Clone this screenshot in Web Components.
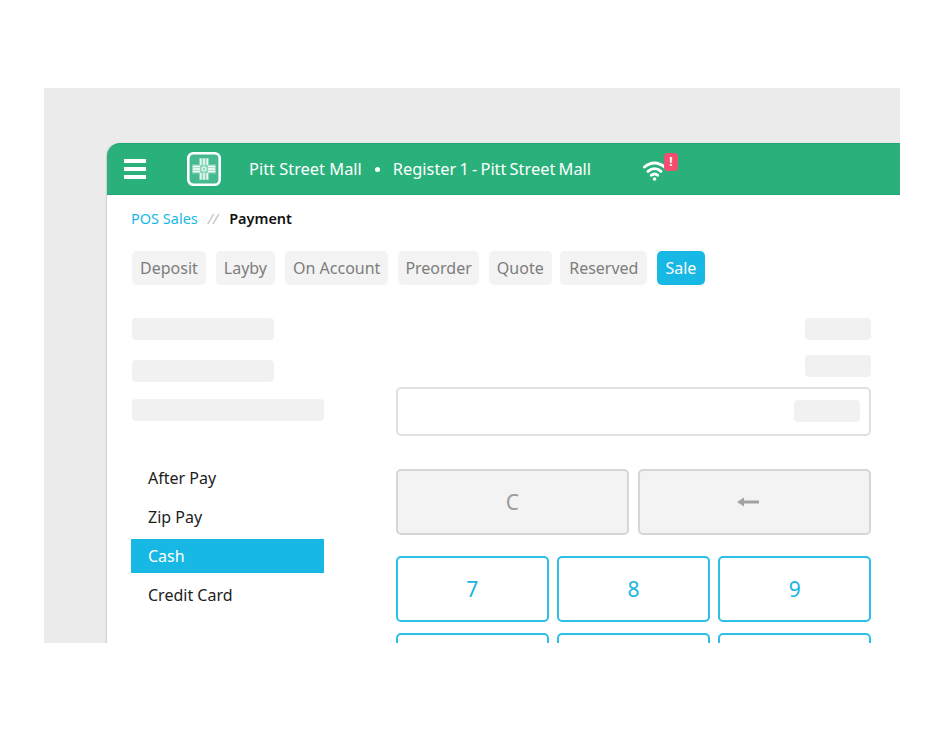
<!DOCTYPE html>
<html>
<head>
<meta charset="utf-8">
<title>POS Sales - Payment</title>
<style>
  html, body { margin: 0; background: #fff; }
  body { font-family: "Noto Sans", "Open Sans", sans-serif; height: 729px; overflow: hidden; }
</style>
</head>
<body>
<pos-stage>
  <pos-topbar>
    <span>Pitt Street Mall</span>
    <span>Register 1 - Pitt Street Mall</span>
  </pos-topbar>
  <pos-breadcrumb current="Payment">POS Sales</pos-breadcrumb>
  <pos-tabs>
    <pos-tab>Deposit</pos-tab>
    <pos-tab style="--px:7.5px">Layby</pos-tab>
    <pos-tab>On Account</pos-tab>
    <pos-tab style="--px:7.5px;margin-left:-1px">Preorder</pos-tab>
    <pos-tab style="margin-left:-1px">Quote</pos-tab>
    <pos-tab style="--px:9px;margin-left:-2px">Reserved</pos-tab>
    <pos-tab active style="--px:8.5px;margin-left:-1px">Sale</pos-tab>
  </pos-tabs>
  <pos-payment>
    <div slot="side">
      <pos-bar style="--w:142px;--h:22px;--mb:20px"></pos-bar>
      <pos-bar style="--w:142px;--h:22px;--mb:17px"></pos-bar>
      <pos-bar style="--w:192px;--h:22px;--mb:40px"></pos-bar>
      <pos-methods>
        <pos-method>After Pay</pos-method>
        <pos-method>Zip Pay</pos-method>
        <pos-method active>Cash</pos-method>
        <pos-method>Credit Card</pos-method>
      </pos-methods>
    </div>
    <pos-keypad></pos-keypad>
  </pos-payment>
</pos-stage>

<script>
class PosStage extends HTMLElement {
  constructor() {
    super()
    this.attachShadow({ mode: 'open' })
    this.shadowRoot.innerHTML = `
      <style>
        :host { display: block; width: 856px; height: 555px; margin: 88px 0 0 44px; padding: 55px 0 0 63px;
          box-sizing: border-box; background: #ebebeb; overflow: hidden; }
        #card { height: 520px; background: #fff; border-top-left-radius: 13px; box-shadow: -1px 0 1px #cfcfcf; }
      </style>
      <div id="card"><slot></slot></div>
    `
  }
}

class PosTopbar extends HTMLElement {
  constructor() {
    super()
    this.attachShadow({ mode: 'open' })
    this.shadowRoot.innerHTML = `
      <style>
        :host { display: flex; align-items: center; height: 52px; box-sizing: border-box; padding-left: 17px;
          background: #2ab17b; border-top: 1px solid #22a672; border-bottom: 1px solid #22a672;
          border-top-left-radius: 13px; color: #fff; font-size: 16.4px; }
        #menu { display: flex; flex-direction: column; gap: 4.5px; width: 22px; margin-right: 41px; }
        #menu i { display: block; height: 3.5px; background: #fff; }
        svg { display: block; flex: none; }
        #logo { margin-right: 28px; }
        #names { display: flex; align-items: center; white-space: nowrap; width: 395px; padding-bottom: 2px; }
        ::slotted([slot=second]) { word-spacing: -1.1px; }
        #dot { width: 5px; height: 5px; border-radius: 50%; background: #fff; margin: 2px 13px 0 13px; }
        #wifi { position: relative; width: 34px; height: 30px; }
        #badge { position: absolute; left: 20px; top: -1px; width: 14px; height: 18px; border-radius: 4px;
          background: #f54d6f; color: #fff; font: bold 12px/18px "Noto Sans", sans-serif; text-align: center; }
      </style>
      <div id="menu"><i></i><i></i><i></i></div>
      <svg id="logo" width="34" height="34" viewBox="0 0 34 34">
        <rect x="1.3" y="1.3" width="31.4" height="31.4" rx="5" fill="#45ba8e" stroke="#fff" stroke-width="2.6"/>
        <path d="M12 6h10v6.5h7v9h-7V28H12v-6.5H5v-9h7z" fill="#8ad8b9"/>
        <path d="M13.8 6.5v6.5M17 6.5v6.5M20.2 6.5v6.5M13.8 21v6.5M17 21v6.5M20.2 21v6.5M6 14.5h7M6 17h7M6 19.5h7M21 14.5h7M21 17h7M21 19.5h7" stroke="#fff" stroke-width="1.3"/>
        <circle cx="17" cy="17" r="2" fill="none" stroke="#fff" stroke-width="1"/>
      </svg>
      <div id="names"><slot name="first"></slot><span id="dot"></span><slot name="second"></slot></div>
      <div id="wifi">
        <svg width="24" height="24" viewBox="0 0 24 24" style="position:absolute;left:-1px;top:5px" fill="none" stroke="#fff" stroke-width="3" stroke-linecap="round">
          <path d="M1.5 8C7.5 2.5 15.5 2.5 21.5 8"/>
          <path d="M5 12.3C9 8.9 14 8.9 18 12.3"/>
          <path d="M8.4 16.2C10.4 14.6 12.6 14.6 14.6 16.2"/>
          <path d="M11.5 20h.1" stroke-width="3.4"/>
        </svg>
        <div id="badge">!</div>
      </div>
    `
    const spans = this.querySelectorAll('span')
    spans[0].slot = 'first'
    spans[1].slot = 'second'
  }
}

class PosBreadcrumb extends HTMLElement {
  constructor() {
    super()
    this.attachShadow({ mode: 'open' })
    const current = this.getAttribute('current')
    this.shadowRoot.innerHTML = `
      <style>
        :host { display: flex; align-items: center; height: 46px; padding-left: 24px; font-size: 14.5px; color: #17b8e4; }
        #sep { color: #bdbdbd; margin: 0 11px 0 10px; font-style: italic; }
        b { color: #111; font-weight: 600; }
      </style>
      <slot></slot><span id="sep">//</span><b>${current}</b>
    `
  }
}

class PosTabs extends HTMLElement {
  constructor() {
    super()
    this.attachShadow({ mode: 'open' })
    this.shadowRoot.innerHTML = `
      <style>
        :host { display: flex; gap: 10.5px; padding-left: 25px; margin-top: 10px; }
      </style>
      <slot></slot>
    `
  }
}

class PosTab extends HTMLElement {
  constructor() {
    super()
    this.attachShadow({ mode: 'open' })
    this.shadowRoot.innerHTML = `
      <style>
        :host { display: block; height: 34px; line-height: 34px; padding: 0 var(--px, 8px); border-radius: 5px;
          background: #f3f3f3; color: #7d7d7d; font-size: 16px; white-space: nowrap; }
        :host([active]) { background: #17b8e4; color: #fff; }
      </style>
      <slot></slot>
    `
  }
}

class PosPayment extends HTMLElement {
  constructor() {
    super()
    this.attachShadow({ mode: 'open' })
    this.shadowRoot.innerHTML = `
      <style>
        :host { display: grid; grid-template-columns: 193px 475px; column-gap: 72px; padding: 33px 0 0 24px; }
      </style>
      <slot name="side"></slot>
      <slot></slot>
    `
  }
}

class PosBar extends HTMLElement {
  constructor() {
    super()
    this.attachShadow({ mode: 'open' })
    this.shadowRoot.innerHTML = `
      <style>
        :host { display: block; width: var(--w); height: var(--h); margin-bottom: var(--mb, 0); margin-left: var(--ml, 1px);
          border-radius: 4px; background: #f1f1f1; }
      </style>
    `
  }
}

class PosMethods extends HTMLElement {
  constructor() {
    super()
    this.attachShadow({ mode: 'open' })
    this.shadowRoot.innerHTML = `
      <style>
        :host { display: flex; flex-direction: column; gap: 5px; }
      </style>
      <slot></slot>
    `
  }
}

class PosMethod extends HTMLElement {
  constructor() {
    super()
    this.attachShadow({ mode: 'open' })
    this.shadowRoot.innerHTML = `
      <style>
        :host { display: block; height: 34px; line-height: 34px; padding-left: 17px; color: #1c1c1c; font-size: 16px; }
        :host([active]) { background: #17b8e4; color: #fff; }
      </style>
      <slot></slot>
    `
  }
}

class PosKey extends HTMLElement {
  constructor() {
    super()
    this.attachShadow({ mode: 'open' })
    this.shadowRoot.innerHTML = `
      <style>
        :host { display: flex; align-items: center; justify-content: center; height: 66px; box-sizing: border-box;
          border: 2px solid #2cc0e9; border-radius: 5px; background: #fff; color: #17b4e0; font-size: 21px; }
        :host([grey]) { border-color: #d6d6d6; background: #f3f3f3; color: #9b9b9b; }
        svg { display: block; }
      </style>
      <slot></slot>
    `
  }
}

class PosKeypad extends HTMLElement {
  constructor() {
    super()
    this.attachShadow({ mode: 'open' })
    const digits = ['7', '8', '9', '', '', '']
    this.shadowRoot.innerHTML = `
      <style>
        :host { display: block; }
        #totals { display: flex; flex-direction: column; align-items: flex-end; gap: 15px; }
        #amount { display: flex; justify-content: flex-end; align-items: center; height: 49px; box-sizing: border-box;
          margin-top: 10px; padding: 0 9px 2px 0; border: 2px solid #e0e0e0; border-radius: 5px; }
        #clear { display: grid; grid-template-columns: 1fr 1fr; gap: 9px; margin-top: 33px; }
        #digits { display: grid; grid-template-columns: repeat(3, 1fr); gap: 11px 8.5px; margin-top: 21px; }
        #back { margin-right: 14px; }
      </style>
      <div id="totals">
        <pos-bar style="--w:66px;--h:22px"></pos-bar>
        <pos-bar style="--w:66px;--h:22px"></pos-bar>
      </div>
      <div id="amount"><pos-bar style="--w:66px;--h:22px"></pos-bar></div>
      <div id="clear">
        <pos-key grey>C</pos-key>
        <pos-key grey>
          <svg id="back" width="22" height="10" viewBox="0 0 22 10"><path d="M0 5l7-4.5v3h15v3H7v3z" fill="#a2a2a2"/></svg>
        </pos-key>
      </div>
      <div id="digits">
        ${digits.map(d => `<pos-key>${d}</pos-key>`).join('')}
      </div>
    `
  }
}

customElements.define('pos-stage', PosStage)
customElements.define('pos-topbar', PosTopbar)
customElements.define('pos-breadcrumb', PosBreadcrumb)
customElements.define('pos-tabs', PosTabs)
customElements.define('pos-tab', PosTab)
customElements.define('pos-payment', PosPayment)
customElements.define('pos-bar', PosBar)
customElements.define('pos-methods', PosMethods)
customElements.define('pos-method', PosMethod)
customElements.define('pos-key', PosKey)
customElements.define('pos-keypad', PosKeypad)
</script>
</body>
</html>
